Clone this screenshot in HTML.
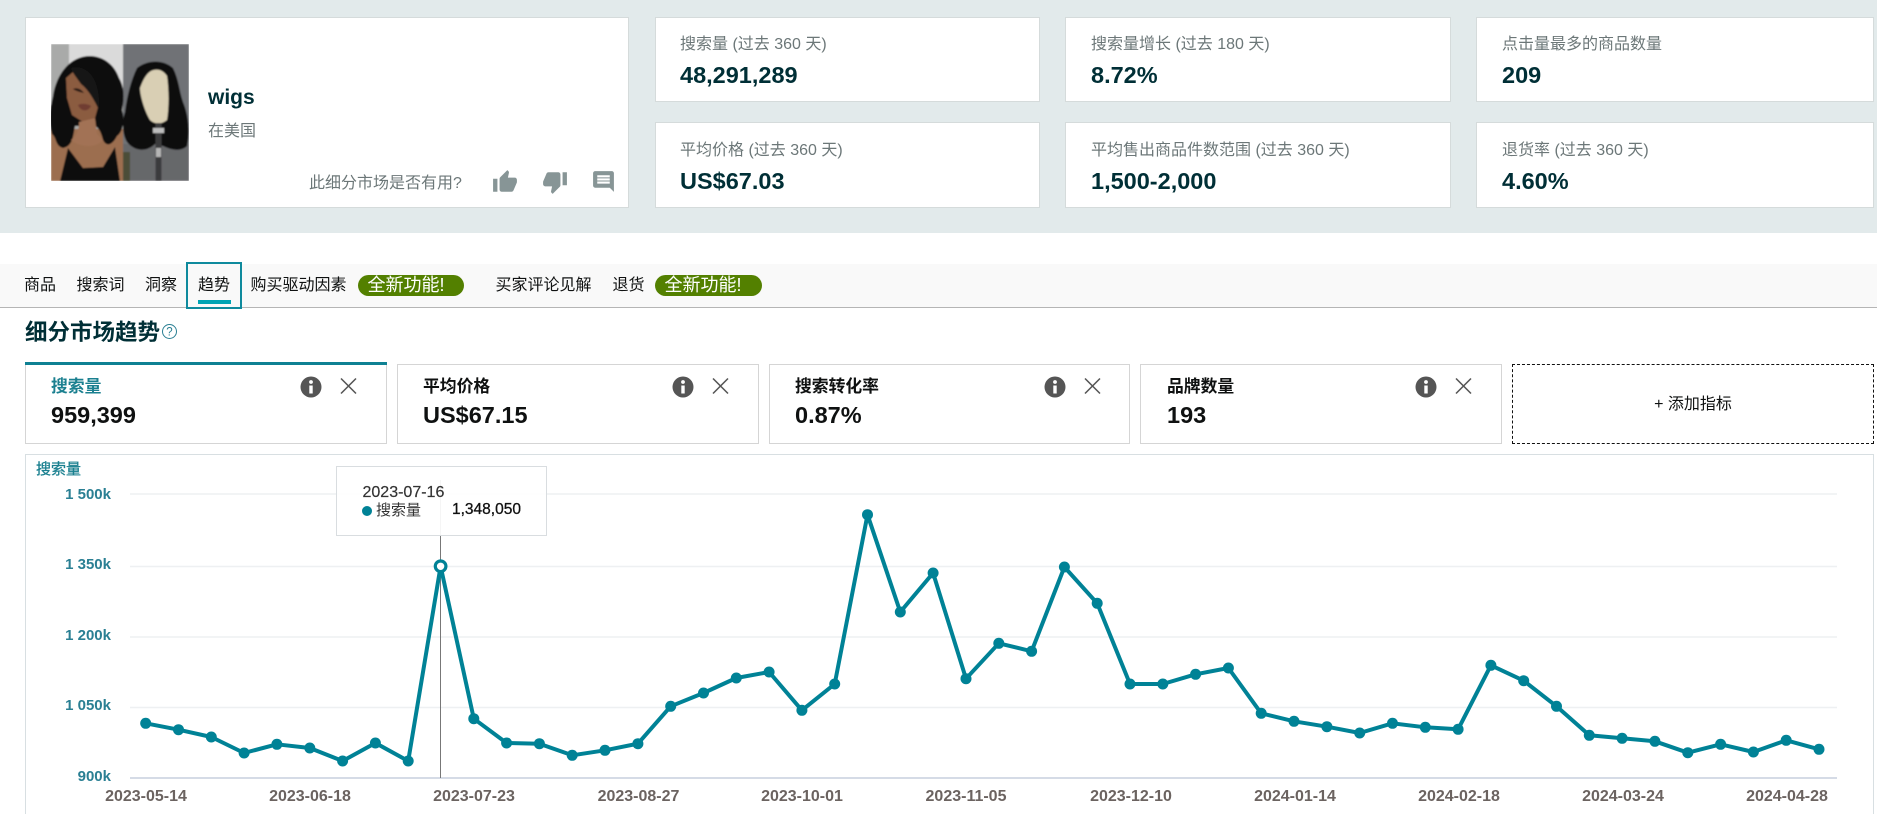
<!DOCTYPE html>
<html lang="zh-CN">
<head>
<meta charset="utf-8">
<title>细分市场趋势</title>
<style>
html,body{margin:0;padding:0;background:#fff;width:1877px;height:814px;overflow:hidden}
body{font-family:"Liberation Sans","Noto Sans CJK SC",sans-serif;color:#0f1111}
#w{position:absolute;left:0;top:0;width:1877px;height:814px;overflow:hidden}
.a{position:absolute;white-space:nowrap;line-height:24px}
.box{position:absolute;box-sizing:border-box;background:#fff;border:1px solid #d5dbdb}
.lb{font-size:16px;color:#6c7778}
.val{font-size:23.5px;font-weight:700;color:#002f36}
.tab{font-size:16px;color:#0f1111}
.pill{position:absolute;top:275px;height:21px;width:106px;box-sizing:border-box;padding-left:9.5px;border-radius:11px;background:#538000;color:#fff;font-size:18px;line-height:21px;text-align:left}
.m{position:absolute;top:364px;height:80px;box-sizing:border-box;background:#fff;border:1px solid #d5d5d5}
.mt{font-size:16.8px;font-weight:700;color:#0f1111}
.mv{font-size:23.5px;font-weight:700;color:#0f1111}
svg{position:absolute;display:block}
</style>
</head>
<body>
<div id="w">
<div style="position:absolute;left:0;top:0;width:1877px;height:233px;background:#e2eaeb"></div>
<div class="box" style="left:25px;top:17px;width:604px;height:191px"></div>
<div class="box" style="left:655px;top:17px;width:385px;height:85px"></div>
<div class="box" style="left:1065px;top:17px;width:386px;height:85px"></div>
<div class="box" style="left:1476px;top:17px;width:398px;height:85px"></div>
<div class="box" style="left:655px;top:122px;width:385px;height:86px"></div>
<div class="box" style="left:1065px;top:122px;width:386px;height:86px"></div>
<div class="box" style="left:1476px;top:122px;width:398px;height:86px"></div>

<svg style="left:51px;top:44px" width="138" height="137" viewBox="0 0 138 137">
<defs><filter id="b" x="-5%" y="-5%" width="110%" height="110%"><feGaussianBlur stdDeviation="0.7"/></filter><clipPath id="c"><rect width="138" height="137"/></clipPath></defs>
<g clip-path="url(#c)"><g filter="url(#b)">
<rect width="138" height="137" fill="#707276"/>
<rect width="72" height="137" fill="#a9aaa9"/>
<rect x="18" width="54" height="55" fill="#dadada"/>
<rect x="72" y="100" width="66" height="37" fill="#66676a"/>
<rect x="72" y="108" width="7" height="29" fill="#4b4d38"/>
<rect x="0" y="85" width="72" height="52" fill="#9c6e50"/>
<path d="M17 104 L32 124 L52 123 L64 103 L69 137 L9 137Z" fill="#0e0e0e"/>
<path d="M28 14 C44 8 62 16 68 34 C74 44 73 56 71 66 C74 76 72 88 66 92 C62 100 56 104 52 96 C50 88 48 84 44 82 L24 82 C22 92 22 102 12 104 C4 102 6 94 1 90 C-2 78 -1 64 2 52 C4 38 12 20 28 14Z" fill="#0b0b0b"/>
<path d="M15 34 L22 28 L32 41 L44 54 L47 63 L44 74 L32 78 L21 71 L16 54Z" fill="#8b5b41"/>
<path d="M28 78 L44 74 L46 90 L52 96 C46 104 30 104 20 96 C26 92 28 86 28 78Z" fill="#a27254"/>
<path d="M20 24 C34 20 50 32 48 66 C44 58 38 46 30 40 C26 34 22 30 20 24Z" fill="#181818"/>
<path d="M27 61 C31 59 37 60 40 62 C37 68 30 68 27 61Z" fill="#6f3c32"/>
<path d="M22 45 C26 43 30 45 33 49 C28 48 25 47 22 45Z" fill="#2a1a14"/>
<path d="M86 24 C96 16 112 15 122 24 C128 36 128 46 132 58 C138 72 139 90 136 102 C130 108 120 106 112 102 L104 100 C96 108 84 108 76 98 C71 90 71 76 74 68 C76 52 80 36 86 24Z" fill="#0e0e0f"/>
<path d="M100 27 C106 24 112 26 116 32 C118 46 118 64 116 76 C110 81 103 80 99 76 C94 68 89 52 89 44 C92 36 95 30 100 27Z" fill="#d9cfb4"/>
<rect x="104.500" y="79" width="6" height="58" fill="#3a3a3c"/>
<rect x="102" y="84" width="11" height="5" fill="#bdbdbd"/>
<rect x="105" y="104" width="5" height="9" fill="#b5b5b5"/>
</g></g>
</svg>

<div class="a" style="left:208px;top:86px;font-size:21px;font-weight:700;color:#002f36">wigs</div>
<div class="a lb" style="left:208px;top:120px">在美国</div>
<div class="a lb" style="left:309px;top:172px">此细分市场是否有用?</div>
<svg style="left:492px;top:169px" width="26" height="26" viewBox="0 0 24 24"><path fill="#879596" d="M1 21h4V9H1v12zm22-11c0-1.1-.9-2-2-2h-6.31l.95-4.57.03-.32c0-.41-.17-.79-.44-1.06L14.17 1 7.59 7.59C7.22 7.95 7 8.45 7 9v10c0 1.1.9 2 2 2h9c.83 0 1.54-.5 1.84-1.22l3.02-7.05c.09-.23.14-.47.14-.73v-2z"/></svg>
<svg style="left:542px;top:169px" width="26" height="26" viewBox="0 0 24 24"><path fill="#879596" d="M15 3H6c-.83 0-1.54.5-1.84 1.22l-3.02 7.05c-.09.23-.14.47-.14.73v2c0 1.1.9 2 2 2h6.31l-.95 4.57-.03.32c0 .41.17.79.44 1.06L9.83 23l6.59-6.59c.36-.36.58-.86.58-1.41V5c0-1.1-.9-2-2-2zm4 0v12h4V3h-4z"/></svg>
<svg style="left:591px;top:169px" width="25" height="25" viewBox="0 0 24 24"><path fill="#879596" d="M21.99 4c0-1.1-.89-2-1.99-2H4c-1.1 0-2 .9-2 2v12c0 1.1.9 2 2 2h14l4 4-.01-18zM18 14H6v-2h12v2zm0-3H6V9h12v2zm0-3H6V6h12v2z"/></svg>

<div class="a lb" style="left:680px;top:33px">搜索量 (过去 360 天)</div>
<div class="a val" style="left:680px;top:63px">48,291,289</div>
<div class="a lb" style="left:1091px;top:33px">搜索量增长 (过去 180 天)</div>
<div class="a val" style="left:1091px;top:63px">8.72%</div>
<div class="a lb" style="left:1502px;top:33px">点击量最多的商品数量</div>
<div class="a val" style="left:1502px;top:63px">209</div>
<div class="a lb" style="left:680px;top:139px">平均价格 (过去 360 天)</div>
<div class="a val" style="left:680px;top:169px">US$67.03</div>
<div class="a lb" style="left:1091px;top:139px">平均售出商品件数范围 (过去 360 天)</div>
<div class="a val" style="left:1091px;top:169px">1,500-2,000</div>
<div class="a lb" style="left:1502px;top:139px">退货率 (过去 360 天)</div>
<div class="a val" style="left:1502px;top:169px">4.60%</div>

<div style="position:absolute;left:0;top:264px;width:1877px;height:43px;background:#f9f9f9;border-bottom:1px solid #b5b5b5"></div>
<div style="position:absolute;left:186px;top:262px;width:56px;height:47px;box-sizing:border-box;border:2px solid #0f8a9d"></div>
<div style="position:absolute;left:198px;top:300px;width:33px;height:4px;background:#00a4b4"></div>
<div class="a tab" style="left:24px;top:274px">商品</div>
<div class="a tab" style="left:76.500px;top:274px">搜索词</div>
<div class="a tab" style="left:145px;top:274px">洞察</div>
<div class="a tab" style="left:198px;top:274px">趋势</div>
<div class="a tab" style="left:250.500px;top:274px">购买驱动因素</div>
<div class="pill" style="left:358px">全新功能!</div>
<div class="a tab" style="left:495.500px;top:274px">买家评论见解</div>
<div class="a tab" style="left:612.500px;top:274px">退货</div>
<div class="pill" style="left:655px;width:107px">全新功能!</div>

<div class="a" style="left:25px;top:321px;font-size:22.500px;font-weight:700;color:#002f36">细分市场趋势</div>
<svg style="left:161px;top:323px" width="17" height="17" viewBox="0 0 17 17"><circle cx="8.500" cy="8.500" r="7" fill="none" stroke="#2a7f93" stroke-width="1"/><text x="8.500" y="12.500" text-anchor="middle" font-size="11.500" fill="#2a7f93" font-family="Liberation Sans, sans-serif">?</text></svg>

<div class="m" style="left:25px;width:362px"></div>
<div style="position:absolute;left:25px;top:362px;width:362px;height:3px;background:#0f8193"></div>
<div class="m" style="left:397px;width:362px"></div>
<div class="m" style="left:769px;width:361px"></div>
<div class="m" style="left:1140px;width:362px"></div>
<div class="a" style="left:1512px;top:364px;width:362px;height:80px;box-sizing:border-box;border:1px dashed #111;text-align:center;line-height:79px;font-size:16px;color:#0f1111">+ 添加指标</div>

<div class="a mt" style="left:51px;top:375px;color:#1b8090">搜索量</div>
<div class="a mv" style="left:51px;top:403px">959,399</div>
<div class="a mt" style="left:423px;top:375px">平均价格</div>
<div class="a mv" style="left:423px;top:403px">US$67.15</div>
<div class="a mt" style="left:795px;top:375px">搜索转化率</div>
<div class="a mv" style="left:795px;top:403px">0.87%</div>
<div class="a mt" style="left:1167px;top:375px">品牌数量</div>
<div class="a mv" style="left:1167px;top:403px">193</div>

<svg style="left:0;top:0" width="1877" height="460" viewBox="0 0 1877 460">
<defs><g id="inf"><circle r="10.5" fill="#555"/><circle cy="-5" r="1.9" fill="#fff"/><rect x="-1.7" y="-1.5" width="3.4" height="8" fill="#fff"/></g>
<path id="x" d="M-7.500-7.500L7.500 7.500M7.500-7.500L-7.500 7.500" stroke="#555" stroke-width="1.500" fill="none"/></defs>
<use href="#inf" x="311" y="387"/><use href="#x" x="348.500" y="386"/>
<use href="#inf" x="683" y="387"/><use href="#x" x="720.500" y="386"/>
<use href="#inf" x="1055" y="387"/><use href="#x" x="1092.500" y="386"/>
<use href="#inf" x="1426" y="387"/><use href="#x" x="1463.500" y="386"/>
</svg>

<div class="box" style="left:25px;top:454px;width:1849px;height:380px;border-color:#d8dfe2"></div>
<div class="a" style="left:36px;top:458px;font-size:15px;color:#1b8090;-webkit-text-stroke:.3px #1b8090">搜索量</div>

<svg style="left:0;top:0" width="1877" height="814" viewBox="0 0 1877 814" font-family="Liberation Sans, sans-serif">
<defs><marker id="d" markerUnits="userSpaceOnUse" markerWidth="12" markerHeight="12" refX="6" refY="6" overflow="visible"><circle cx="6" cy="6" r="5.500" fill="#008296"/></marker></defs>
<g stroke="#eef0f2" stroke-width="1.500">
<line x1="130" x2="1837" y1="494" y2="494"/>
<line x1="130" x2="1837" y1="566.500" y2="566.500"/>
<line x1="130" x2="1837" y1="637" y2="637"/>
<line x1="130" x2="1837" y1="707.500" y2="707.500"/>
</g>
<line x1="130" x2="1837" y1="778" y2="778" stroke="#d5dbe6" stroke-width="2"/>
<line x1="440.500" x2="440.500" y1="480" y2="778" stroke="#777" stroke-width="1"/>
<g font-size="15" font-weight="700" fill="#2a7f93" text-anchor="end">
<text x="111" y="499">1 500k</text>
<text x="111" y="569">1 350k</text>
<text x="111" y="640">1 200k</text>
<text x="111" y="710">1 050k</text>
<text x="111" y="781">900k</text>
</g>
<g font-size="16" font-weight="700" fill="#6b6360" text-anchor="middle">
<text x="146" y="801">2023-05-14</text>
<text x="310" y="801">2023-06-18</text>
<text x="474" y="801">2023-07-23</text>
<text x="638.500" y="801">2023-08-27</text>
<text x="802" y="801">2023-10-01</text>
<text x="966" y="801">2023-11-05</text>
<text x="1131" y="801">2023-12-10</text>
<text x="1295" y="801">2024-01-14</text>
<text x="1459" y="801">2024-02-18</text>
<text x="1623" y="801">2024-03-24</text>
<text x="1787" y="801">2024-04-28</text>
</g>
<polyline fill="none" stroke="#008296" stroke-width="4" stroke-linejoin="round" marker-start="url(#d)" marker-mid="url(#d)" marker-end="url(#d)" points="145.7,723.3 178.5,729.7 211.3,737 244.1,753 276.9,744.3 309.8,748 342.6,761 375.4,743 408.2,761 440.6,566.3 473.8,718.7 506.6,743 539.4,743.7 572.2,755.3 605,750.3 637.9,743.7 670.7,706.3 703.5,693 736.3,678 769.1,672 801.9,710.3 834.7,684 867.5,514.7 900.3,612 933.1,573 966,678.7 998.8,643.3 1031.6,651.3 1064.4,567 1097.2,603.3 1130,684 1162.8,684 1195.6,674.3 1228.4,668 1261.2,713.3 1294,721.3 1326.9,726.7 1359.7,733 1392.5,723.3 1425.3,727.3 1458.1,729.3 1490.9,665.3 1523.7,680.7 1556.5,706.3 1589.3,735.3 1622.1,738.3 1654.9,741.3 1687.8,752.7 1720.6,744.3 1753.4,752 1786.2,740.3 1819,749.3"/>
<circle cx="440.600" cy="566.300" r="5.300" fill="#fff" stroke="#008296" stroke-width="3.200"/>
</svg>

<div style="position:absolute;left:336px;top:466px;width:211px;height:70px;box-sizing:border-box;background:rgba(255,255,255,.93);border:1px solid #d9dde0"></div>
<div class="a" style="left:362.500px;top:481px;font-size:16px;color:#333;-webkit-text-stroke:.2px #333">2023-07-16</div>
<div style="position:absolute;left:362px;top:506px;width:10px;height:10px;border-radius:50%;background:#008296"></div>
<div class="a" style="left:376px;top:499px;font-size:15px;color:#333">搜索量</div>
<div class="a" style="left:452px;top:498px;font-size:15.500px;color:#111;-webkit-text-stroke:.3px #111">1,348,050</div>
</div>
</body>
</html>
